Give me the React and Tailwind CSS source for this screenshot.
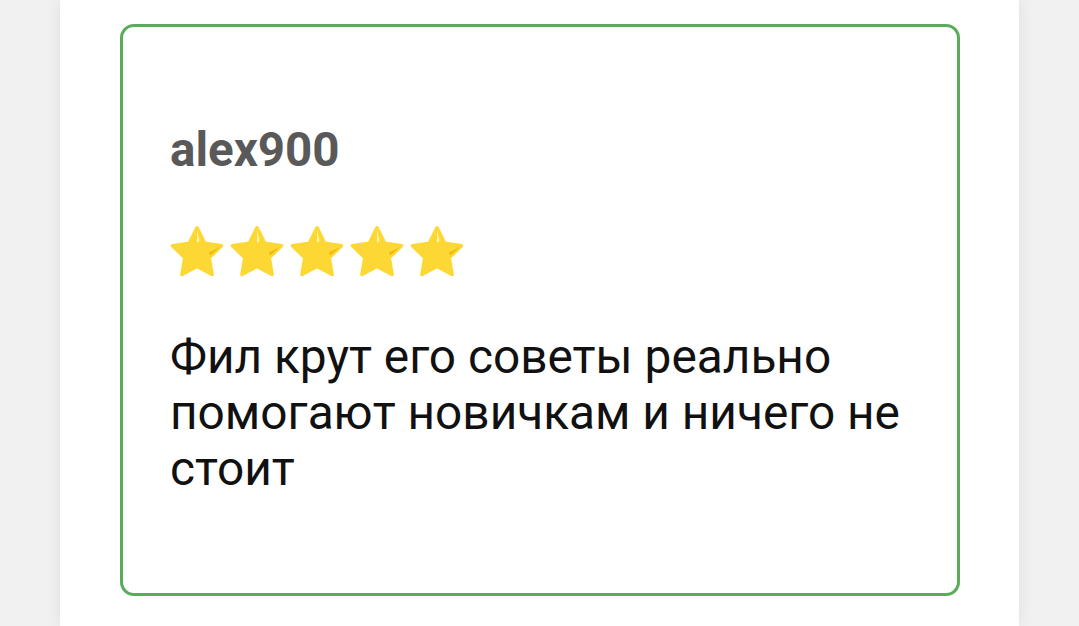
const Star = () => (
  <svg width="60" height="60" viewBox="0 0 24 24" className="shrink-0">
    <path
      d="M12 2.3l3.05 6.15 6.75 1-4.9 4.8 1.15 6.75L12 17.8l-6.05 3.2 1.15-6.75-4.9-4.8 6.75-1z"
      fill="#FDD835"
      stroke="#FDD835"
      strokeWidth="1.4"
      strokeLinejoin="round"
    />
    <path d="M12 2.9l1 4.5-1 1.2z" fill="#FFF59D" />
    <path d="M21.2 10l-4.5 2.3 0.6 1z" fill="#F2B705" />
  </svg>
);

export default function App() {
  return (
    <div
      className="w-[1079px] h-[626px] overflow-hidden bg-[#f1f1f1] flex"
      style={{ fontFamily: 'Roboto, "Noto Sans", sans-serif' }}
    >
      <div className="ml-[60px] w-[959px] h-full bg-white shadow-[0_0_16px_rgba(0,0,0,0.08)] pt-[24px] pl-[60px] pr-[59px]">
        <div className="h-[572px] border-[3px] border-[#5aac5a] rounded-[14px] pl-[47px] pr-[40px] pt-[95px]">
          <div className="text-[47.5px] leading-[56px] font-bold text-[#595959]">alex900</div>
          <div className="flex mt-[44px] -ml-[3px]">
            <Star />
            <Star />
            <Star />
            <Star />
            <Star />
          </div>
          <p className="mt-[47px] text-[47.8px] leading-[56px] text-[#111111]">
            Фил крут его советы реально помогают новичкам и ничего не стоит
          </p>
        </div>
      </div>
    </div>
  );
}
